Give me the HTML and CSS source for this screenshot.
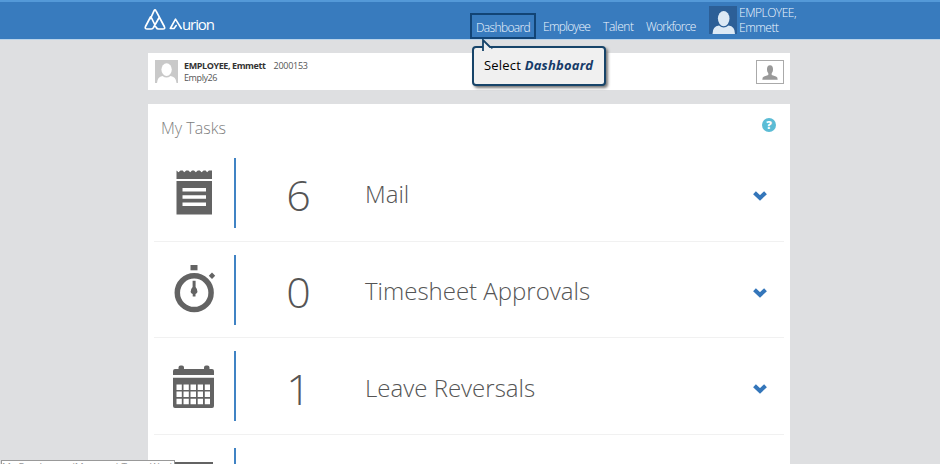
FILE: index.html
```html
<!DOCTYPE html>
<html lang="en">
<head>
<meta charset="utf-8">
<title>Aurion</title>
<link rel="stylesheet" href="styles.css">
</head>
<body>
<header class="topbar">
  <div class="brand">
    <svg class="brand-mark" width="22" height="23" viewBox="0 0 22 23" fill="none" stroke="currentColor" stroke-width="1.7" stroke-linejoin="round" stroke-linecap="round"><path d="M6.500 10.500 10 2.800Q11 .8 12 2.800L20.300 18.500Q21.500 21 19 21H14.500Q13 21 12.200 19.500L7.300 9.500M15.200 9.500 9.500 19.500Q8.800 21 7.300 21H3.200Q.5 21 1.500 18.500L6.500 9"/></svg>
    <span class="brand-name"><svg width="14" height="12" viewBox="0 0 14 12" fill="none" stroke="currentColor" stroke-width="1.600" stroke-linecap="round" stroke-linejoin="round"><path d="M7.200 7.500 5 10.500H1.300L6.500 1.200 12.300 10.500"/></svg><span class="brand-text">urion</span></span>
  </div>
  <nav class="nav">
    <a class="nav-item active">Dashboard</a>
    <a class="nav-item employee">Employee</a>
    <a class="nav-item talent">Talent</a>
    <a class="nav-item workforce">Workforce</a>
  </nav>
  <div class="user">
    <svg class="user-pic" width="28" height="28" viewBox="0 0 28 28"><path fill="#2c5f97" d="M0 0h28v28H0z"/><g fill="#dce9f5"><ellipse cx="14.700" cy="12.600" rx="5.800" ry="7.600"/><path d="M3.500 28Q3.500 20 10 19.500Q14.700 23.500 19.500 19.500Q26 20 26 28z"/></g></svg>
    <div class="user-name"><span>EMPLOYEE,</span><span>Emmett</span></div>
  </div>
</header>
<main class="content">
  <section class="profile">
    <svg width="23" height="23" viewBox="0 0 23 23"><path fill="#c9c9c9" d="M0 0h23v23H0z"/><g fill="#fff"><ellipse cx="11.600" cy="9.600" rx="5.200" ry="6.300"/><path d="M2 23Q2.500 16.500 7.500 16Q11.600 19 15.500 16Q21 16.500 21.500 23z"/></g></svg>
    <div class="profile-text"><div><b>EMPLOYEE, Emmett</b><span class="number">2000153</span></div><div class="sub">Emply26</div></div>
    <button class="person" aria-label="Profile"><svg width="16" height="15" viewBox="0 0 16 15" fill="#999"><path d="M5 5Q4.700 .3 8 .3T11 5Q10.900 7 9.700 8.300V10L14 11.500Q15.700 12 15.700 14.700H.3Q.3 12 2 11.500L6.300 10V8.300Q5.100 7 5 5z"/></svg></button>
  </section>
  <section class="tasks">
    <div class="tasks-head"><h1>My Tasks</h1><span class="help">?</span></div>
    <div class="row">
      <div class="icon mail"><svg width="44" height="50" viewBox="0 0 44 50"><path fill="#636363" d="M4.500 3.500l2 1.800 2-1.800 2.200 0 1.500 1.800 2-1.800h2.200l1.800 1.800 1.800-1.800h2l1.800 1.800 2-1.800h2l1.800 1.800 2-1.800h2l1.500 1.800 1.800-1.800H40V12H4.500zM4.500 14H40v33.500H4.500z"/><path fill="#fff" d="M10.500 21H34v3.500H10.500zM10.500 28.300H34v3.500H10.500zM10.500 35.500H34V39H10.500z"/></svg></div>
      <div class="bar"></div><div class="count">6</div><div class="label">Mail</div><svg class="chevron" width="14" height="10" viewBox="0 0 14 10"><path d="M1.500 1.700 7 7 12.500 1.700"/></svg>
    </div>
    <div class="row">
      <div class="icon timer"><svg width="44" height="50" viewBox="0 0 44 50"><g fill="#636363"><path d="M18.500 1h7v5.300h-7z"/><path d="m40 8.500 3.200 3.200-3.200 3.200-3.200-3.200z"/><path d="M20.600 16.800h3V23Q25.500 25 25.500 28Q24.800 29.500 23.500 30V32.500h-2.800V30Q19 29.500 18.600 28Q18.600 25 20.600 23z"/></g><circle cx="22.200" cy="28.700" r="16.900" fill="none" stroke="#636363" stroke-width="5.500"/></svg></div>
      <div class="bar"></div><div class="count">0</div><div class="label">Timesheet Approvals</div><svg class="chevron" width="14" height="10" viewBox="0 0 14 10"><path d="M1.500 1.700 7 7 12.500 1.700"/></svg>
    </div>
    <div class="row">
      <div class="icon calendar"><svg width="44" height="50" viewBox="0 0 44 50"><path fill="#636363" d="M1 12V8q0-2 2-2h3.500V4.500q0-2 2-2h1.500q2 0 2 2V6h20V4.500q0-2 2-2h1.500q2 0 2 2V6H40q2 0 2 2v4zM1 14.700H42V43q0 2-2 2H3q-2 0-2-2z"/><path fill="#fff" d="M4.500 21.500h5.300v5.500H4.500zm7 0h5.300v5.500h-5.300zm7 0h5.500v5.500h-5.500zm7.200 0H31v5.500h-5.300zm7.100 0H38v5.500h-5.200zM4.500 28.500h5.300V34H4.500zm7 0h5.300V34h-5.300zm7 0h5.500V34h-5.500zm7.200 0H31V34h-5.300zm7.100 0H38V34h-5.200zM4.500 35.700h5.300v5.500H4.500zm7 0h5.300v5.500h-5.300zm7 0h5.500v5.500h-5.500zm7.200 0H31v5.500h-5.300zm7.100 0H38v5.500h-5.200z"/></svg></div>
      <div class="bar"></div><div class="count">1</div><div class="label">Leave Reversals</div><svg class="chevron" width="14" height="10" viewBox="0 0 14 10"><path d="M1.500 1.700 7 7 12.500 1.700"/></svg>
    </div>
    <div class="row last">
      <div class="icon"><svg width="44" height="8" viewBox="0 0 44 8"><path fill="#636363" d="M2 4h39v4H2z"/></svg></div>
      <div class="bar"></div>
    </div>
  </section>
</main>
<div class="callout">Select <strong>Dashboard</strong>
  <svg class="pointer" width="22" height="12" viewBox="0 0 22 12"><path d="M1 12V1L10 10" fill="#f0f0f0" stroke="#174469" stroke-width="1.800"/><path d="M2 9h7l2 3H2z" fill="#f0f0f0"/></svg>
</div>
<div class="status">My Employees (Manager) Team Work</div>
</body>
</html>
```
FILE: styles.css
```css
* { box-sizing: border-box; }
body {
  margin: 0;
  width: 940px;
  height: 464px;
  overflow: hidden;
  position: relative;
  background: #dedfe1;
  font-family: "Open Sans", sans-serif;
  color: #555;
}
.topbar {
  width: 940px;
  height: 40px;
  display: flex;
  background: #387bbe;
  border-top: 2px solid #5499d8;
  border-bottom: 1px solid #b9d3ea;
  color: #f0f7ff;
  padding-left: 144px;
}
.brand { display: flex; width: 326px; color: #fff; }
.brand-mark { margin-top: 6px; }
.brand-name { display: flex; margin: 16px 0 0 3px; height: 14px; }
.brand-text { font: 500 15px/12px "Open Sans", sans-serif; letter-spacing: -1.1px; margin-left: -1px; }
.nav { display: flex; margin-top: 11px; width: 238px; }
.nav-item { height: 26px; line-height: 28px; white-space: nowrap; font-size: 12px; font-weight: 300; letter-spacing: -.4px; }
.active { width: 66px; border: 2px solid #124475; line-height: 25px; padding-left: 4px; letter-spacing: -.65px; }
.employee { margin-left: 7px; width: 60px; letter-spacing: -.7px; }
.talent { width: 43px; }
.workforce { letter-spacing: -.7px; }
.user { display: flex; }
.user-pic { margin: 4px 0 0 1px; }
.user-name { display: flex; flex-direction: column; margin: 3px 0 0 2px; font-size: 12px; font-weight: 300; line-height: 15px; letter-spacing: -.5px; }
.content { width: 642px; margin-left: 148px; }
.profile { height: 37px; margin-top: 13px; background: #fff; display: flex; padding: 7px 6px 0 7px; }
.profile-text { margin-left: 6px; font-size: 9px; line-height: 12px; }
.profile-text b { color: #333; font-weight: 700; letter-spacing: -.4px; }
.number { margin-left: 8px; letter-spacing: -.25px; }
.sub { letter-spacing: -.4px; }
.person { margin-left: auto; width: 28px; height: 24px; padding: 1px 0 0; border: 1px solid #aaa; background: #fff; display: grid; place-items: center; }
.tasks { height: 360px; margin-top: 14px; background: #fff; padding: 0 6px; overflow: hidden; }
.tasks-head { height: 41px; display: flex; justify-content: space-between; padding: 12px 8px 0 7px; }
h1 { margin: 0; font-size: 16px; line-height: 24px; font-weight: 300; color: #808080; }
.help { width: 14px; height: 14px; margin-top: 2px; border-radius: 50%; background: #5bbcd5; color: #fff; text-align: center; font: 800 11px/14px "Open Sans", sans-serif; }
.row { height: 96.700px; display: flex; align-items: center; border-bottom: 1px solid #f1f1f1; }
.icon { width: 44px; height: 50px; margin-left: 18px; }
.icon svg { display: block; }
.mail { margin-bottom: 2px; }
.timer { margin-bottom: 2px; }
.calendar { margin-top: 4px; }
.bar { width: 2px; height: 70px; margin-left: 18px; background: #4083c4; }
.last { height: 29px; align-items: flex-end; border: 0; }
.last .icon { height: 8px; }
.last .icon svg { margin-top: 2px; }
.last .bar { height: 16px; }
.count { width: 125px; text-align: center; font-size: 43px; line-height: 60px; font-weight: 300; padding-top: 4px; margin-top: 1px; }
.label { font-size: 24px; line-height: 40px; font-weight: 300; margin: 3px 0 0 4px; }
.chevron { margin: 6px 17px 0 auto; fill: none; stroke: #3476ba; stroke-width: 4; }
.callout {
  position: absolute;
  left: 472px;
  top: 46px;
  width: 134px;
  height: 40px;
  padding-left: 10px;
  border: 2px solid #174469;
  border-radius: 4px;
  background: #f0f0f0;
  box-shadow: 2px 2px 3px #777;
  color: #000;
  font-size: 13px;
  letter-spacing: .2px;
  line-height: 35px;
  white-space: nowrap;
}
.callout strong { color: #153b68; font-style: italic; }
.pointer { position: absolute; left: 8px; top: -9px; }
.status { position: absolute; left: 1px; top: 460px; width: 174px; height: 4px; overflow: hidden; border: 1px solid #999; border-bottom: 0; background: #fff; font-size: 10px; line-height: 12px; white-space: nowrap; color: #999; }
```
